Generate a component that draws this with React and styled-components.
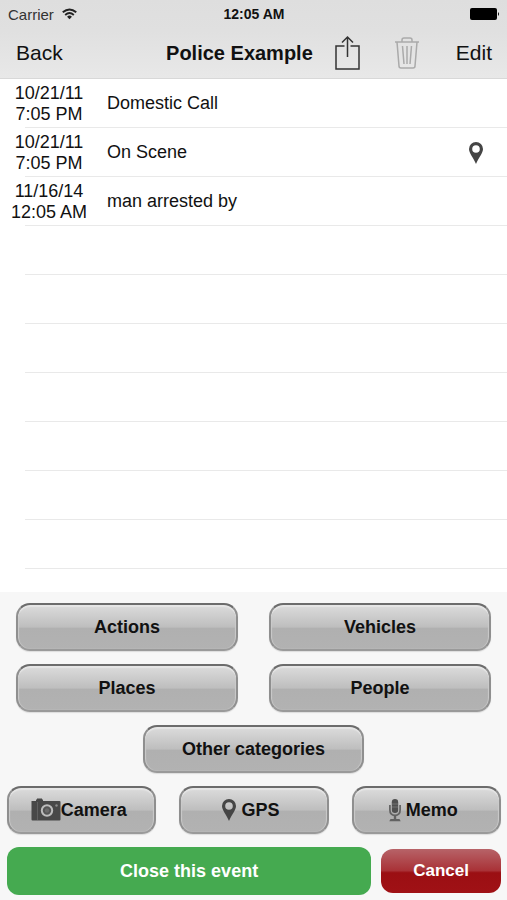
import React from "react";
import styled, { createGlobalStyle } from "styled-components";

const GlobalStyle = createGlobalStyle`
  * { box-sizing: border-box; }
  body {
    margin: 0;
    background: #f7f7f7;
    color: #111;
    font-family: "Liberation Sans", Arial, sans-serif;
    font-size: 18px;
  }
  button { font: inherit; color: inherit; cursor: pointer; }
  svg { display: block; flex: none; }
`;

const Screen = styled.div`
  display: flex;
  flex-direction: column;
  min-height: 100vh;
`;

const Header = styled.header`
  background: linear-gradient(#dedede, #e0e0e0 40%, #e8e8e8);
  border-bottom: 1px solid #d8d8d8;
`;

const StatusBar = styled.div`
  display: grid;
  grid-template-columns: 1fr auto 1fr;
  align-items: center;
  height: 28px;
  padding: 0 7px 0 8px;
  font-size: 14px;
`;

const Carrier = styled.span`
  display: flex;
  align-items: center;
  gap: 8px;
  color: #333;
  font-size: 15px;
`;

const Clock = styled.time`
  font-weight: 700;
`;

const Battery = styled.span`
  justify-self: end;
`;

const NavBar = styled.nav`
  display: flex;
  align-items: center;
  height: 50px;
  padding: 0 15px 0 16px;
`;

const NavButton = styled.button`
  padding: 0;
  border: 0;
  background: none;
  font-size: 21px;
`;

const Title = styled.h1`
  margin: 0 22px 0 auto;
  font-size: 20px;
  font-weight: 700;
  white-space: nowrap;
`;

const Tools = styled.div`
  display: flex;
  align-items: center;
  gap: 35px;
  margin-right: 37px;
`;

const List = styled.ul`
  flex: 1;
  margin: 0;
  padding: 0 0 23px;
  list-style: none;
  background: #fff;
`;

const Row = styled.li`
  display: flex;
  align-items: center;
  height: 49px;
  padding-right: 24px;
  background: linear-gradient(#e9e9e9, #e9e9e9) 25px 100% / 100% 1px no-repeat;
`;

const Stamp = styled.time`
  width: 98px;
  line-height: 21px;
  text-align: center;
`;

const Entry = styled.span`
  flex: 1;
  padding-left: 9px;
`;

const Panel = styled.footer`
  display: flex;
  flex-direction: column;
  gap: 13px;
  padding: 11px 6px 5px 7px;
  background: #f7f7f7;
`;

const Categories = styled.div`
  display: grid;
  grid-template-columns: 1fr 1fr;
  gap: 13px 31px;
  padding: 0 10px 0 9px;
`;

const Media = styled.div`
  display: grid;
  grid-template-columns: repeat(3, 1fr);
  gap: 23px;
`;

const Finish = styled.div`
  display: grid;
  grid-template-columns: 73fr 24fr;
  align-items: center;
  gap: 10px;
`;

const GlossButton = styled.button`
  display: flex;
  align-items: center;
  justify-content: center;
  gap: ${(p) => p.$gap || "0"};
  grid-column: ${(p) => (p.$wide ? "1 / -1" : "auto")};
  justify-self: ${(p) => (p.$wide ? "center" : "stretch")};
  width: ${(p) => (p.$wide ? "calc(50% - 16px)" : "auto")};
  height: 48px;
  padding: 0;
  border: 2px solid #8f8f8f;
  border-top-color: #6c6c6c;
  border-bottom-color: #9a9a9a;
  border-radius: 14px;
  background: linear-gradient(#dcdcdc, #bebebe 50%, #b0b0b0 53%, #b2b2b2);
  box-shadow: inset 0 2px 1px #e6e6e6, inset 1px 0 1px #c8c8c8,
    inset -1px 0 1px #c8c8c8, 0 1px 1px #dcdcdc;
  font-weight: 700;
`;

const MediaButton = styled(GlossButton)`
  padding-right: 6px;
`;

const SolidButton = styled.button`
  height: ${(p) => (p.$danger ? "44px" : "48px")};
  padding: 0;
  border: 0;
  border-radius: 12px;
  background: ${(p) =>
    p.$danger
      ? "linear-gradient(#b76368, #a93237 49%, #9b0f13 54%, #a01115)"
      : "#45aa50"};
  color: #fff;
  font-size: ${(p) => (p.$danger ? "17px" : "18px")};
  font-weight: 700;
`;

const WifiIcon = () => (
  <svg width="15" height="12" viewBox="0 0 16 12" fill="none" stroke="#222" strokeWidth="2" aria-hidden="true">
    <path d="M.8 4.2Q8-2 15.2 4.2M3.4 7Q8 3 12.6 7" />
    <path d="M5.4 8.8Q8 6.6 10.6 8.8L8 11.6Z" fill="#222" stroke="none" />
  </svg>
);

const BatteryIcon = () => (
  <svg width="30" height="12" viewBox="0 0 30 12" aria-label="Battery full" role="img">
    <rect width="27" height="12" rx="2" />
    <path d="M28 4Q30 6 28 8Z" />
  </svg>
);

const ShareIcon = () => (
  <svg width="25" height="36" viewBox="0 0 25 36" fill="none" stroke="#333" strokeWidth="1.5" aria-hidden="true">
    <path d="M9.5 11H1V34H24V11H15.5M12.5 22V2M7 7.5L12.5 2L18 7.5" />
  </svg>
);

const TrashIcon = () => (
  <svg width="24" height="34" viewBox="0 0 24 34" fill="none" stroke="#aaa" strokeWidth="1.5" aria-hidden="true">
    <path d="M0 6H24M7 6V4Q7 2 9 2H15Q17 2 17 4V6M2 6L4 30Q4 32 6 32H18Q20 32 20 30L22 6M7.5 10L9 28M12 10V28M16.5 10L15 28" />
  </svg>
);

const PinIcon = () => (
  <svg width="14" height="22" viewBox="0 0 14 22" fill="#454545" fillRule="evenodd" aria-hidden="true">
    <path d="M7 0A7 7 0 0 0 0 7C0 11 4 15 7 22C10 15 14 11 14 7A7 7 0 0 0 7 0ZM7 3.2A3.8 3.8 0 1 1 7 10.8A3.8 3.8 0 1 1 7 3.2Z" />
  </svg>
);

const CameraIcon = () => (
  <svg width="30" height="24" viewBox="0 0 30 24" aria-hidden="true">
    <path d="M.5 3H5V1.5H6V.5H11V1.5H12V3H28.5Q29.5 3 29.5 4V21.5Q29.5 22.5 28.5 22.5H1.5Q.5 22.5 .5 21.5Z" fill="#484848" />
    <path d="M6.5 4V22" stroke="#606060" />
    <circle cx="16" cy="12.5" r="5.2" fill="#555" stroke="#bcbcbc" strokeWidth="2" />
    <circle cx="16" cy="12.5" r="2.2" fill="#6b6b6b" />
    <circle cx="25.5" cy="7.5" r="1.2" fill="#8c8c8c" />
  </svg>
);

const MicIcon = () => (
  <svg width="12" height="23" viewBox="0 0 12 23" aria-hidden="true">
    <rect x="2.8" width="6.4" height="14" rx="3.2" fill="#505050" />
    <path d="M3 5H9M3 8H9" stroke="#7c7c7c" strokeWidth=".8" />
    <path d="M.9 6V11Q.9 16.3 6 16.3Q11.1 16.3 11.1 11V6" fill="none" stroke="#626262" strokeWidth="1.7" />
    <path d="M6 16V21" stroke="#626262" strokeWidth="2.4" />
    <path d="M.3 22.3L1.5 20H10.5L11.7 22.3Z" fill="#626262" />
  </svg>
);

const events = [
  { date: "10/21/11", time: "7:05 PM", text: "Domestic Call" },
  { date: "10/21/11", time: "7:05 PM", text: "On Scene", located: true },
  { date: "11/16/14", time: "12:05 AM", text: "man arrested by" },
];
const emptyRows = Array.from({ length: 7 }, (_, i) => i);

export default function App() {
  return (
    <Screen>
      <GlobalStyle />
      <Header>
        <StatusBar>
          <Carrier>Carrier <WifiIcon /></Carrier>
          <Clock>12:05 AM</Clock>
          <Battery><BatteryIcon /></Battery>
        </StatusBar>
        <NavBar>
          <NavButton>Back</NavButton>
          <Title>Police Example</Title>
          <Tools>
            <NavButton aria-label="Share"><ShareIcon /></NavButton>
            <NavButton aria-label="Delete"><TrashIcon /></NavButton>
          </Tools>
          <NavButton>Edit</NavButton>
        </NavBar>
      </Header>
      <List>
        {events.map((e) => (
          <Row key={e.text}>
            <Stamp>{e.date}<br />{e.time}</Stamp>
            <Entry>{e.text}</Entry>
            {e.located && <PinIcon />}
          </Row>
        ))}
        {emptyRows.map((i) => <Row key={i} aria-hidden="true" />)}
      </List>
      <Panel>
        <Categories>
          <GlossButton>Actions</GlossButton>
          <GlossButton>Vehicles</GlossButton>
          <GlossButton>Places</GlossButton>
          <GlossButton>People</GlossButton>
          <GlossButton $wide>Other categories</GlossButton>
        </Categories>
        <Media>
          <MediaButton><CameraIcon />Camera</MediaButton>
          <MediaButton $gap="5px"><PinIcon />GPS</MediaButton>
          <MediaButton $gap="5px"><MicIcon />Memo</MediaButton>
        </Media>
        <Finish>
          <SolidButton>Close this event</SolidButton>
          <SolidButton $danger>Cancel</SolidButton>
        </Finish>
      </Panel>
    </Screen>
  );
}
